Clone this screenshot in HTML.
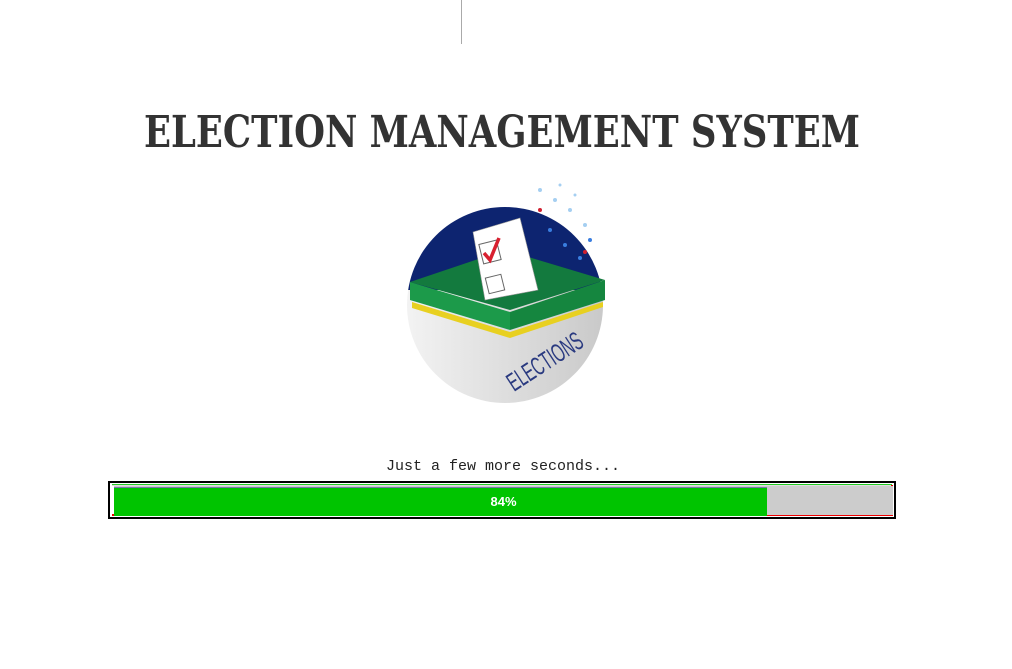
<!DOCTYPE html>
<html><head><meta charset="utf-8"><style>
html,body{margin:0;padding:0;background:#fff;width:1012px;height:669px;overflow:hidden;position:relative}
.vl{position:absolute;left:461px;top:0;width:1px;height:44px;background:#aaa}
.title{position:absolute;left:144px;top:108px;height:50px;white-space:nowrap;font-family:"DejaVu Serif",serif;font-weight:bold;font-size:44px;color:#333;line-height:50px;transform-origin:0 0}
.msg{position:absolute;left:386px;top:458px;font-family:"Liberation Mono",monospace;font-size:15px;color:#222;line-height:18px}
.outer{position:absolute;left:108px;top:481px;width:784px;height:34px;border:2px solid #000;}
.gl{position:absolute;left:2px;top:1px;right:2px;height:2px;background:#2c2;}
.wl{position:absolute;left:2px;top:2px;right:2px;height:1px;background:#ddd;}
.rl{position:absolute;left:2px;bottom:1px;right:1px;height:2px;background:#e00}
.rr{position:absolute;right:1px;top:2px;bottom:1px;width:2px;background:#e00}
.track{position:absolute;left:4px;top:3px;width:779px;height:29px;background:#ccc}
.fill{position:absolute;left:0;top:1px;width:653px;height:28px;background:#00c400;border-top:1px solid #77a}
.pct{position:absolute;left:0;width:779px;top:8px;text-align:center;font-family:"Liberation Sans",sans-serif;font-weight:bold;font-size:13px;color:#fff}
</style></head><body>
<div class="vl"></div>
<div class="title" id="t">ELECTION MANAGEMENT SYSTEM</div>
<svg style="position:absolute;left:395px;top:175px" width="215" height="235" viewBox="395 175 215 235">
<defs><linearGradient id="g" x1="0" x2="1"><stop offset="0" stop-color="#f4f4f4"/><stop offset="1" stop-color="#c8c8c8"/></linearGradient>
<clipPath id="c"><circle cx="505" cy="305" r="98"/></clipPath></defs>
<g clip-path="url(#c)">
<rect x="400" y="200" width="210" height="210" fill="url(#g)"/>
<rect x="400" y="200" width="210" height="90" fill="#0d2470"/>
</g>
<g fill="#6ab0e8" opacity="0.6">
<circle cx="540" cy="190" r="2"/><circle cx="555" cy="200" r="2"/><circle cx="570" cy="210" r="2"/><circle cx="585" cy="225" r="2"/><circle cx="560" cy="185" r="1.5"/><circle cx="575" cy="195" r="1.5"/></g>
<g fill="#3a7ee0"><circle cx="550" cy="230" r="2"/><circle cx="565" cy="245" r="2"/><circle cx="580" cy="258" r="2"/><circle cx="590" cy="240" r="2"/></g>
<g fill="#d02030"><circle cx="540" cy="210" r="2"/><circle cx="585" cy="252" r="2"/></g>
<polygon points="410,282 505,250 605,280 510,310" fill="#137a3e"/>
<polygon points="410,282 510,312 510,330 410,300" fill="#1c9a4a"/>
<polygon points="510,312 605,280 605,300 510,330" fill="#15863f"/>
<polygon points="412,302 510,332 510,338 412,308" fill="#e8d020"/>
<polygon points="510,332 603,302 603,307 510,338" fill="#e8d020"/>
<polygon points="473,232 520,218 538,290 485,300" fill="#fff" stroke="#999" stroke-width="0.6"/>
<rect x="481" y="242" width="18" height="20" fill="none" stroke="#666" stroke-width="1" transform="rotate(-14 490 252)"/>
<path d="M484 253 L490 260 L499 238" stroke="#d82030" stroke-width="3.5" fill="none"/>
<rect x="487" y="276" width="16" height="16" fill="none" stroke="#666" stroke-width="1" transform="rotate(-14 495 284)"/>
<text x="0" y="0" transform="translate(514,392) rotate(-33) scale(0.75,1.3)" font-family="Liberation Sans,sans-serif" font-size="20" fill="#2a3a80">ELECTIONS</text>
</svg>
<div class="msg">Just a few more seconds...</div>
<div class="outer"><div class="gl"></div><div class="wl"></div><div class="rl"></div><div class="rr"></div>
<div class="track"><div class="fill"></div><div class="pct">84%</div></div></div>
<script>var t=document.getElementById('t');var r=t.getBoundingClientRect().width;t.style.transform='scale('+(716/r)+',1.0)';</script>
</body></html>
